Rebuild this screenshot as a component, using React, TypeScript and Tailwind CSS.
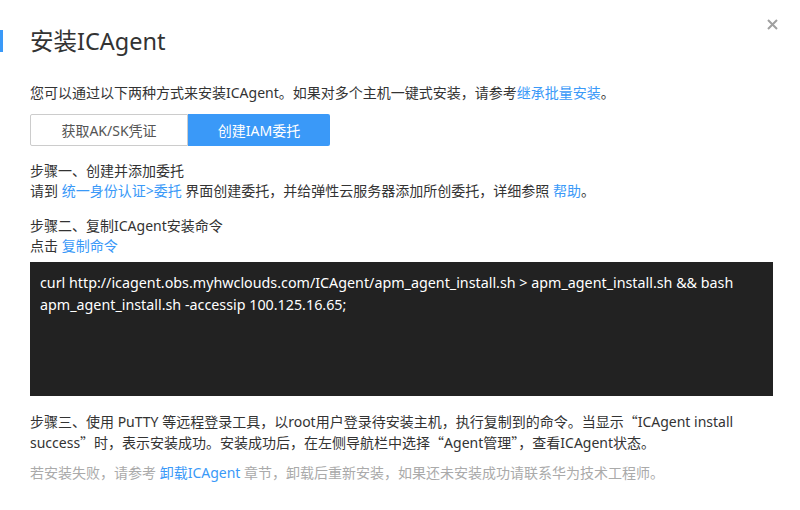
export default function App() {
  const font = { fontFamily: '"Noto Sans", "Noto Sans CJK SC", sans-serif' };
  const cjk = { fontFamily: '"Noto Sans CJK SC", sans-serif' };
  return (
    <div
      className="relative w-[800px] h-[510px] bg-white text-[#333] overflow-hidden"
      style={font}
    >
      {/* close */}
      <button className="absolute left-[767px] top-[19px] w-[11px] h-[11px]">
        <svg viewBox="0 0 11 11" width="11" height="11">
          <path d="M1 1L10 10M10 1L1 10" stroke="#a0a0a0" strokeWidth="2" />
        </svg>
      </button>

      {/* header */}
      <div className="flex items-center h-[22px] mt-[30px]">
        <div className="w-[3px] h-[22px] bg-[#3a99f8]" />
        <h1 className="ml-[27px] text-[23.5px] leading-[22px] text-[#333]">安装ICAgent</h1>
      </div>

      <div className="pl-[30px] pr-[27px] text-[14px]">
        <p className="mt-[31px] leading-[20px]">
          您可以通过以下两种方式来安装ICAgent。如果对多个主机一键式安装，请参考
          <span className="text-[#3a99f8]">继承批量安装</span>。
        </p>

        {/* tabs */}
        <div className="flex mt-[11px]">
          <div className="w-[158px] h-[32px] flex items-center justify-center border border-[#ccc] rounded-l-[2px] text-[#555]">
            获取AK/SK凭证
          </div>
          <div className="w-[142px] h-[32px] flex items-center justify-center bg-[#3a99f8] rounded-r-[2px] text-white">
            创建IAM委托
          </div>
        </div>

        <div className="mt-[15px] leading-[20px]">
          <p>步骤一、创建并添加委托</p>
          <p>
            请到 <span className="text-[#3a99f8]">统一身份认证&gt;委托</span>{' '}
            界面创建委托，并给弹性云服务器添加所创委托，详细参照{' '}
            <span className="text-[#3a99f8]">帮助</span>。
          </p>
        </div>

        <div className="mt-[15px] leading-[20px]">
          <p>步骤二、复制ICAgent安装命令</p>
          <p>
            点击 <span className="text-[#3a99f8]">复制命令</span>
          </p>
        </div>

        <div className="mt-[6px] h-[134px] bg-[#222] px-[10px] py-[10px] text-white text-[14.3px] leading-[22px]">
          curl http://icagent.obs.myhwclouds.com/ICAgent/apm_agent_install.sh &gt; apm_agent_install.sh &amp;&amp; bash
          <br />
          apm_agent_install.sh -accessip 100.125.16.65;
        </div>

        <p className="mt-[15px] leading-[20px]">
          步骤三、使用 PuTTY 等远程登录工具，以root用户登录待安装主机，执行复制到的命令。当显示
          <span style={cjk}>“</span>ICAgent install success<span style={cjk}>”</span>
          时，表示安装成功。安装成功后，在左侧导航栏中选择<span style={cjk}>“</span>Agent管理
          <span style={cjk}>”</span>，查看ICAgent状态。
        </p>

        <p className="mt-[10px] leading-[20px] text-[#aaa]">
          若安装失败，请参考 <span className="text-[#3a99f8]">卸载ICAgent</span>{' '}
          章节，卸载后重新安装，如果还未安装成功请联系华为技术工程师。
        </p>
      </div>
    </div>
  );
}
